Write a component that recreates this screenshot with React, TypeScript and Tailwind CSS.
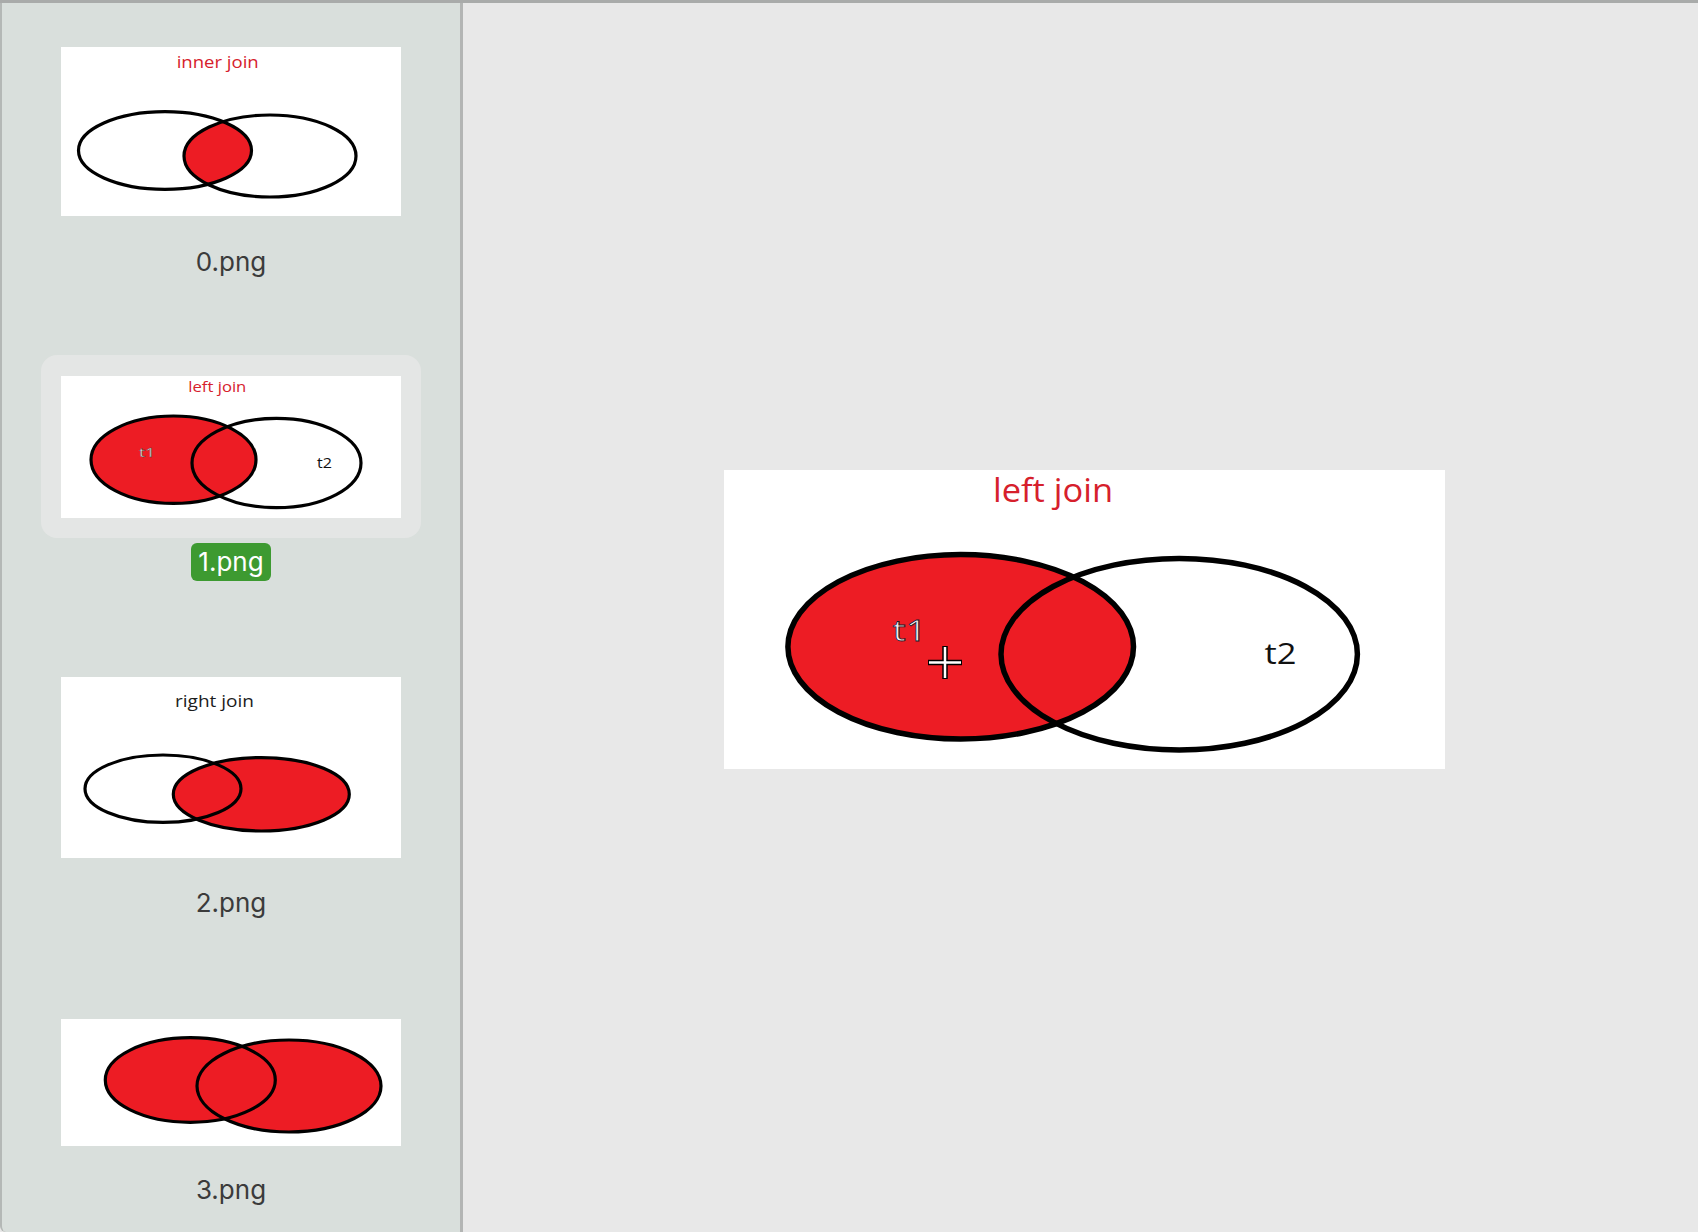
import React from 'react';

const RED = '#ed1c24';
const TITLE_RED = '#d6202c';

interface EllipseSpec {
  cx: number;
  cy: number;
  rx: number;
  ry: number;
}

interface VennProps {
  id: string;
  width: number;
  height: number;
  left: EllipseSpec;
  right: EllipseSpec;
  mode: 'inner' | 'left' | 'right' | 'full';
  stroke: number;
  children?: React.ReactNode;
}

// Paint-style venn drawing: two ellipses, red where the join keeps rows
const Venn: React.FC<VennProps> = ({ id, width, height, left, right, mode, stroke, children }) => {
  return (
    <svg width={width} height={height} viewBox={`0 0 ${width} ${height}`} className="block">
      <defs>
        <clipPath id={`${id}-clip`}>
          <ellipse cx={left.cx} cy={left.cy} rx={left.rx} ry={left.ry} />
        </clipPath>
      </defs>
      <rect width={width} height={height} fill="#ffffff" />
      {mode === 'inner' && (
        <ellipse cx={right.cx} cy={right.cy} rx={right.rx} ry={right.ry} fill={RED} clipPath={`url(#${id}-clip)`} />
      )}
      {(mode === 'left' || mode === 'full') && (
        <ellipse cx={left.cx} cy={left.cy} rx={left.rx} ry={left.ry} fill={RED} />
      )}
      {(mode === 'right' || mode === 'full') && (
        <ellipse cx={right.cx} cy={right.cy} rx={right.rx} ry={right.ry} fill={RED} />
      )}
      <ellipse cx={left.cx} cy={left.cy} rx={left.rx} ry={left.ry} fill="none" stroke="#000" strokeWidth={stroke} />
      <ellipse cx={right.cx} cy={right.cy} rx={right.rx} ry={right.ry} fill="none" stroke="#000" strokeWidth={stroke} />
      {children}
    </svg>
  );
};

const textFont = '"Open Sans", "Noto Sans", sans-serif';

const Thumb: React.FC<{ children: React.ReactNode; h: string }> = ({ children, h }) => (
  <div className={`w-[340px] ${h} bg-white overflow-hidden`}>{children}</div>
);

const Label: React.FC<{ text: string }> = ({ text }) => (
  <div className="h-[30px] leading-[30px] text-[26px] text-[#3b3b3b] font-['Inter',sans-serif]">{text}</div>
);

export default function App() {
  return (
    <div className="w-[1698px] h-[1232px] flex border-t-[3px] border-[#a9abaa] bg-[#e8e8e8] overflow-hidden">
      {/* Sidebar with thumbnails */}
      <div className="w-[463px] shrink-0 h-full flex flex-col items-center bg-[#d9dfdc] border-l-2 border-r-[3px] border-l-[#b4b8b6] border-r-[#b3b5b4] rounded-bl-md">
        <div className="mt-[44px]">
          <Thumb h="h-[169px]">
            <Venn
              id="t0"
              width={340}
              height={169}
              mode="inner"
              stroke={3.2}
              left={{ cx: 104, cy: 103.5, rx: 86.5, ry: 38.8 }}
              right={{ cx: 209, cy: 109, rx: 86, ry: 41 }}
            >
              <text x={115.7} y={20.5} fontSize={16} fill={TITLE_RED} fontFamily={textFont} textLength={82} lengthAdjust="spacingAndGlyphs">
                inner join
              </text>
            </Venn>
          </Thumb>
        </div>
        <div className="mt-[31px]">
          <Label text="0.png" />
        </div>

        {/* Selected item */}
        <div className="mt-[78px] w-[380px] h-[183px] rounded-2xl bg-[#e4e6e5] flex justify-center pt-[21px]">
          <Thumb h="h-[142px]">
            <Venn
              id="t1"
              width={340}
              height={142}
              mode="left"
              stroke={3.2}
              left={{ cx: 112.5, cy: 83.7, rx: 82.5, ry: 43.7 }}
              right={{ cx: 215.5, cy: 87, rx: 84.5, ry: 44.7 }}
            >
              <text x={127.3} y={15.5} fontSize={15} fill={TITLE_RED} fontFamily={textFont} textLength={58} lengthAdjust="spacingAndGlyphs">
                left join
              </text>
              <text x={78} y={81} fontSize={13} fill="#e8e4ea" stroke="#333" strokeWidth={0.3} fontFamily={textFont} textLength={16} lengthAdjust="spacingAndGlyphs">
                t1
              </text>
              <text x={256} y={92} fontSize={14} fill="#111" fontFamily={textFont} textLength={15} lengthAdjust="spacingAndGlyphs">
                t2
              </text>
            </Venn>
          </Thumb>
        </div>
        <div className="mt-[5px] h-[38px] px-[7px] rounded-md bg-[#3d9a31] text-white text-[26px] leading-[38px] font-['Inter',sans-serif]">
          1.png
        </div>

        <div className="mt-[96px]">
          <Thumb h="h-[181px]">
            <Venn
              id="t2"
              width={340}
              height={181}
              mode="right"
              stroke={3.2}
              left={{ cx: 102, cy: 111.7, rx: 78, ry: 33.7 }}
              right={{ cx: 200.3, cy: 117.3, rx: 88, ry: 36.7 }}
            >
              <text x={114} y={29.5} fontSize={17} fill="#1c1c1c" fontFamily={textFont} textLength={79} lengthAdjust="spacingAndGlyphs">
                right join
              </text>
            </Venn>
          </Thumb>
        </div>
        <div className="mt-[30px]">
          <Label text="2.png" />
        </div>

        <div className="mt-[101px]">
          <Thumb h="h-[127px]">
            <Venn
              id="t3"
              width={340}
              height={127}
              mode="full"
              stroke={3.2}
              left={{ cx: 129.3, cy: 61, rx: 85, ry: 42.3 }}
              right={{ cx: 228, cy: 67, rx: 92, ry: 46 }}
            />
          </Thumb>
        </div>
        <div className="mt-[29px]">
          <Label text="3.png" />
        </div>
      </div>

      {/* Preview area */}
      <div className="flex-1 h-full pl-[261px] pt-[467px]">
        <div className="w-[721px] h-[299px] bg-white">
          <Venn
            id="main"
            width={721}
            height={299}
            mode="left"
            stroke={5.5}
            left={{ cx: 236.7, cy: 176.8, rx: 172.8, ry: 92.2 }}
            right={{ cx: 455.2, cy: 184.2, rx: 178.2, ry: 95.8 }}
          >
            <text x={269} y={32} fontSize={33} fill={TITLE_RED} fontFamily={textFont} textLength={120} lengthAdjust="spacingAndGlyphs">
              left join
            </text>
            <text x={168.6} y={171.4} fontSize={29} fill="#f2eef4" stroke="#1a1a2a" strokeWidth={0.8} fontFamily={textFont} textLength={34} lengthAdjust="spacingAndGlyphs">
              t1
            </text>
            {/* cursor crosshair */}
            <g>
              <path d="M221 176 V209 M204 192.5 H238" stroke="#000" strokeWidth={5.5} />
              <path d="M221 177 V208 M205 192.5 H237" stroke="#fff" strokeWidth={2.5} />
            </g>
            <text x={540.4} y={194} fontSize={30} fill="#111" fontFamily={textFont} textLength={32} lengthAdjust="spacingAndGlyphs">
              t2
            </text>
          </Venn>
        </div>
      </div>
    </div>
  );
}
